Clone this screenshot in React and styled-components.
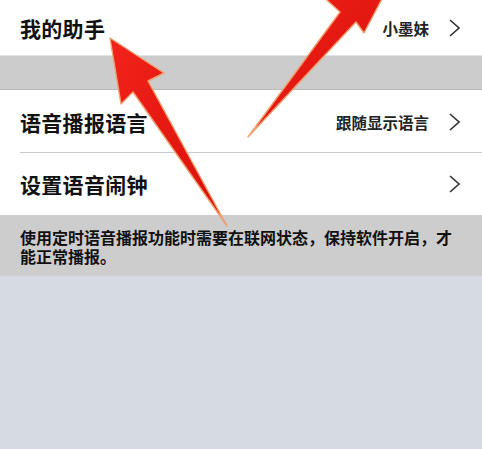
import React from 'react';
import styled, { createGlobalStyle } from 'styled-components';

const GlobalStyle = createGlobalStyle`
  html, body {
    margin: 0;
    padding: 0;
    background: #d6dae3;
  }
  body {
    font-family: "Noto Sans CJK SC", "Noto Sans", sans-serif;
  }
`

const Page = styled.div`
  position: relative;
  width: 482px;
  height: 449px;
  overflow: hidden;
  background: #d6dae3;
  display: flex;
  flex-direction: column;
`

const Row = styled.div`
  height: ${p => p.height}px;
  background: #ffffff;
  display: flex;
  align-items: center;
  justify-content: space-between;
  padding: 0 22px 0 20px;
  box-sizing: border-box;
  position: relative;

  ${p => p.divider && `
    &::after {
      content: '';
      position: absolute;
      left: 20px;
      right: 0;
      bottom: 0;
      height: 1px;
      background: #c9c9c9;
    }
  `}
`

const Title = styled.span`
  font-size: 21px;
  font-weight: 700;
  color: #111;
  letter-spacing: 0.3px;
`

const Right = styled.div`
  display: flex;
  align-items: center;
  gap: 20px;
`

const Value = styled.span`
  font-size: 15.5px;
  font-weight: 700;
  color: #222;
`

const Gap = styled.div`
  height: 35px;
  background: #cccccc;
  border-top: 1px solid #e4e4e4;
  border-bottom: 1px solid #b8b8b8;
  box-sizing: border-box;
`

const Note = styled.div`
  background: #cdcdcd;
  padding: 13px 20px 10px 20px;
  font-size: 16px;
  line-height: 19px;
  font-weight: 700;
  color: #111;
  letter-spacing: 0px;
`

const Overlay = styled.svg`
  position: absolute;
  top: 0;
  left: 0;
  pointer-events: none;
`

const Chevron = () => (
  <svg width="11" height="18" viewBox="0 0 11 18">
    <polyline points="1,1 10,9 1,17" fill="none" stroke="#333" strokeWidth="1.6" />
  </svg>
)

const Item = ({ title, value, height, divider }) => (
  <Row height={height} divider={divider}>
    <Title>{title}</Title>
    <Right>
      {value && <Value>{value}</Value>}
      <Chevron />
    </Right>
  </Row>
)

const App = () => {
  return (
    <Page>
      <GlobalStyle />
      <Item title="我的助手" value="小墨妹" height={55} />
      <Gap />
      <Item title="语音播报语言" value="跟随显示语言" height={63} divider />
      <Item title="设置语音闹钟" height={62} />
      <Note>使用定时语音播报功能时需要在联网状态，保持软件开启，才能正常播报。</Note>

      <Overlay width="482" height="449" viewBox="0 0 482 449">
        <defs>
          <linearGradient id="red" x1="0" y1="0" x2="1" y2="1">
            <stop offset="0" stopColor="#f2231a" />
            <stop offset="1" stopColor="#d70f0a" />
          </linearGradient>
        </defs>
        <polygon
          points="110,38 164,73 148,81 227,226 133,92 121,104"
          fill="url(#red)"
          stroke="#f0a070"
          strokeWidth="1.4"
          strokeLinejoin="round"
        />
        <polygon
          points="248,137 356,22 364,33 392,-20 318,-8 340,12"
          fill="url(#red)"
          stroke="#f0a070"
          strokeWidth="1.4"
          strokeLinejoin="round"
        />
      </Overlay>
    </Page>
  );
};

export default App;
